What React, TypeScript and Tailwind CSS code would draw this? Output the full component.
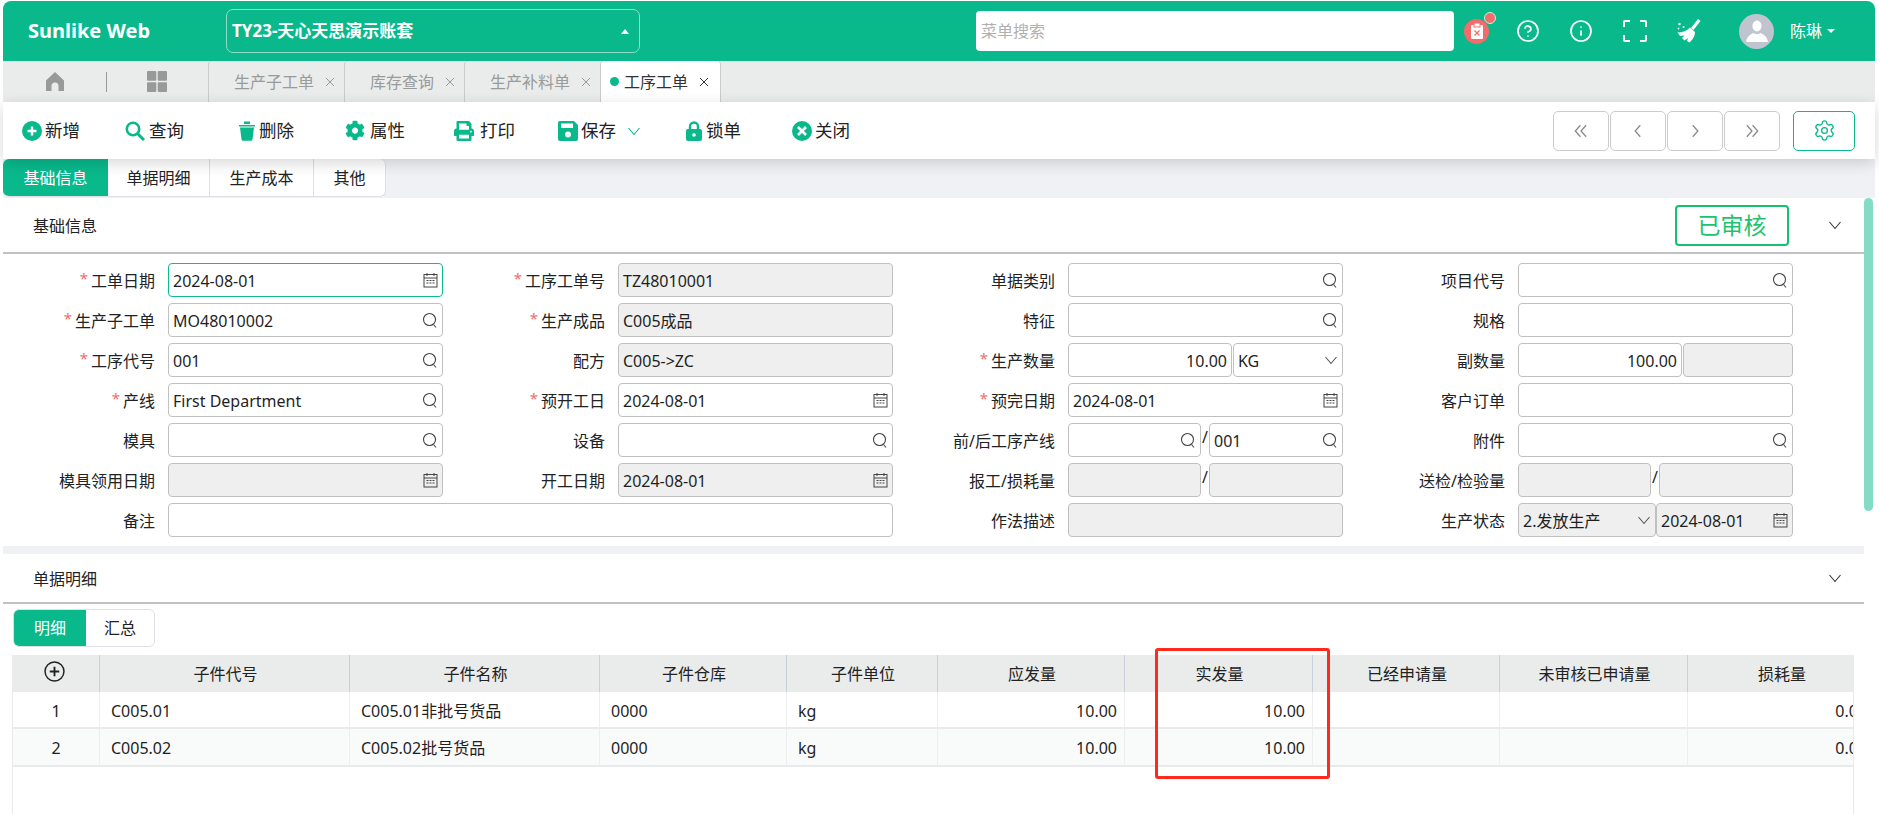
import type { ReactNode } from "react";
import { CircleHelp, Info, Settings } from "lucide-react";
import { FaCog, FaPrint } from "react-icons/fa";

const GREEN = "#09b98c";

function SearchIcon() {
  return (
    <svg width="16" height="17" viewBox="0 0 16 17" fill="none" stroke="#444" strokeWidth="1.1" className="shrink-0">
      <circle cx="7.5" cy="7.5" r="6" />
      <path d="M11.5 12.5l2.5 3" />
    </svg>
  );
}

function CalendarIcon() {
  return (
    <svg width="15" height="16" viewBox="0 0 15 16" fill="none" stroke="#444" strokeWidth="1" className="shrink-0">
      <rect x="1" y="2.5" width="13" height="12.5" />
      <path d="M1 6h13M4 1v3M11 1v3" />
      <path d="M3.5 8.5h2M6.5 8.5h2M9.5 8.5h2M3.5 11h2M6.5 11h2M9.5 11h2" strokeWidth="1.2" />
    </svg>
  );
}

function Chevron({ color = "#555", size = 14 }: { color?: string; size?: number }) {
  return (
    <svg width={size} height={size} viewBox="0 0 14 14" fill="none" stroke={color} strokeWidth="1.1" className="shrink-0">
      <path d="M1.5 4l5.5 6.5L12.5 4" />
    </svg>
  );
}

type BoxProps = {
  children?: ReactNode;
  icon?: ReactNode;
  disabled?: boolean;
  focused?: boolean;
  right?: boolean;
  className?: string;
};

function Box({ children, icon, disabled, focused, right, className = "w-[275px]" }: BoxProps) {
  return (
    <div
      className={`flex h-[34px] shrink-0 items-center rounded-[4px] border pl-[4px] pr-[4px] text-[16px] ${className} ${
        disabled ? "bg-[#eeefee]" : "bg-white"
      } ${focused ? "border-[#0cbb8f]" : "border-[#c0c0c0]"} ${right ? "justify-end" : "justify-between"}`}
    >
      {children !== undefined ? <span className="whitespace-nowrap pt-[2px]">{children}</span> : <span />}
      {icon}
    </div>
  );
}

function Field({ label, req, wide, children }: { label: string; req?: boolean; wide?: boolean; children: ReactNode }) {
  return (
    <div className={`flex items-center ${wide ? "col-span-2" : ""}`}>
      <div className="flex w-[151px] shrink-0 items-center justify-end pt-[2px] text-[16px] text-[#222]">
        {req && <span className="mr-[3px] -translate-y-[3px] text-[15px] text-[#f56c6c]">*</span>}
        {label}
      </div>
      <div className="ml-[13px] flex items-center">{children}</div>
    </div>
  );
}

function Slash() {
  return <span className="w-[8px] -translate-y-[3px] text-center text-[16px] leading-none">/</span>;
}

type ToolItemProps = { icon: ReactNode; label: string; width: string; gap?: string; extra?: ReactNode };

function ToolItem({ icon, label, width, gap = "ml-[3px]", extra }: ToolItemProps) {
  return (
    <div className={`flex shrink-0 items-center ${width}`}>
      <span className="flex w-[20px] justify-center">{icon}</span>
      <span className={`text-[17.500px] text-[#222] ${gap}`}>{label}</span>
      {extra}
    </div>
  );
}

function TopTab({ label, width, active }: { label: string; width: string; active?: boolean }) {
  return (
    <div
      className={`flex h-[41px] shrink-0 items-center rounded-t-[4px] border-l border-[#c8cccc] text-[16px] ${width} ${
        active ? "bg-white pl-[9px] text-[#333]" : "pl-[25px] text-[#9a9a9a]"
      }`}
    >
      {active && <span className="mr-[5px] h-[9px] w-[9px] rounded-full bg-[#09b98c]" />}
      <span className="whitespace-nowrap pt-px">{label}</span>
      <svg width="10" height="10" viewBox="0 0 10 10" stroke={active ? "#333" : "#999"} strokeWidth="1" className="ml-[11px] shrink-0">
        <path d="M1 1l8 8M9 1l-8 8" />
      </svg>
    </div>
  );
}

function NavBtn({ d }: { d: string }) {
  return (
    <div className="flex h-[40px] w-[56px] items-center justify-center rounded-[5px] border border-[#cccccc]">
      <svg width="16" height="16" viewBox="0 0 14 14" fill="none" stroke="#888" strokeWidth="1.1">
        <path d={d} />
      </svg>
    </div>
  );
}

const headers = ["子件代号", "子件名称", "子件仓库", "子件单位", "应发量", "实发量", "已经申请量", "未审核已申请量", "损耗量"];
const rows = [
  ["1", "C005.01", "C005.01非批号货品", "0000", "kg", "10.00", "10.00", "", "", "0.00"],
  ["2", "C005.02", "C005.02批号货品", "0000", "kg", "10.00", "10.00", "", "", "0.00"],
];

export default function App() {
  return (
    <div
      className="relative h-[814px] w-[1879px] overflow-hidden bg-white pl-[3px] pr-[4px] pt-px text-[#1f1f1f]"
      style={{ fontFamily: '"Noto Sans", "Noto Sans CJK SC", sans-serif' }}
    >
      {/* Header */}
      <header className="flex h-[60px] items-center rounded-t-[8px] bg-[#09b98c] text-white">
        <div className="ml-[25px] w-[198px] text-[20px] font-bold">Sunlike Web</div>
        <div className="flex h-[44px] w-[414px] items-center justify-between rounded-[7px] border border-[#8fdcc8] pl-[5px] pr-[10px] text-[17px] font-bold">
          <span>TY23-天心天思演示账套</span>
          <span className="h-0 w-0 border-x-[4px] border-b-[5px] border-x-transparent border-b-white" />
        </div>
        <div className="ml-[336px] flex h-[40px] w-[478px] items-center rounded-[4px] bg-white pl-[5px] text-[16px] text-[#b0b0b0]">
          菜单搜索
        </div>
        <div className="relative ml-[10px] flex h-[25px] w-[25px] items-center justify-center rounded-full bg-[#f36b6b]">
          <svg width="14" height="16" viewBox="0 0 14 16">
            <rect x="1" y="2" width="12" height="14" fill="#fff" rx="1" />
            <rect x="4" y="0" width="6" height="4" fill="#fff" stroke="#f36b6b" strokeWidth="1" />
            <path d="M4.5 7.5l5 5M9.5 7.5l-5 5" stroke="#f36b6b" strokeWidth="1.2" />
          </svg>
          <span className="absolute -right-[7px] -top-[7px] h-[12px] w-[12px] rounded-full border border-[#c9f0e4] bg-[#f36b6b]" />
        </div>
        <CircleHelp size={24} strokeWidth={1.7} className="ml-[27px]" />
        <Info size={24} strokeWidth={1.7} className="ml-[29px]" />
        <svg width="24" height="22" viewBox="0 0 24 22" fill="none" stroke="#fff" strokeWidth="2" className="ml-[30px]">
          <path d="M1 7V2a1 1 0 0 1 1-1h5M17 1h5a1 1 0 0 1 1 1v5M23 15v5a1 1 0 0 1-1 1h-5M7 21H2a1 1 0 0 1-1-1v-5" />
        </svg>
        <svg width="24" height="24" viewBox="0 0 24 24" fill="#fff" className="ml-[30px]">
          <path d="M21 0l2.500 2-7 9-2.500-2z" />
          <path d="M13 8.500l5 4.500c0 4-2.500 8-5.500 10.500L10 22l1-3-3.500 2.500L5 19l2.500-2.500L3 17l-2.500-3.500c5 0 9.500-1.500 12.500-5z" />
          <circle cx="2.500" cy="5" r="1.200" />
          <circle cx="6.500" cy="8" r="1" />
          <circle cx="1.500" cy="9.500" r="0.900" />
        </svg>
        <div className="ml-[38px] flex h-[35px] w-[35px] items-center justify-center overflow-hidden rounded-full bg-[#c0c4cf]">
          <svg width="22" height="24" viewBox="0 0 22 24" fill="#fff">
            <ellipse cx="11" cy="7" rx="4.6" ry="5.4" />
            <path d="M0 23c1-6 5-8 7.500-9 2 1.500 5 1.500 7 0 2.500 1 6.500 3 7.500 9z" />
          </svg>
        </div>
        <span className="ml-[16px] text-[16px]">陈琳</span>
        <span className="ml-[5px] h-0 w-0 border-x-[4px] border-t-[4px] border-x-transparent border-t-white" />
      </header>

      {/* Open tabs */}
      <nav className="flex h-[41px] items-center bg-[#e9eceb]">
        <svg width="20" height="21" viewBox="0 0 20 21" fill="#999" className="ml-[42px]">
          <path d="M10 1l9 8.500V20h-5.500v-5a3.500 3.500 0 0 0-7 0v5H1V9.500z" />
        </svg>
        <span className="ml-[41px] h-[20px] w-px bg-[#999]" />
        <svg width="20" height="21" viewBox="0 0 20 21" fill="#999" className="ml-[40px]">
          <rect x="0" y="0" width="9.300" height="9.800" rx="1" />
          <rect x="10.700" y="0" width="9.300" height="9.800" rx="1" />
          <rect x="0" y="11.200" width="9.300" height="9.800" rx="1" />
          <rect x="10.700" y="11.200" width="9.300" height="9.800" rx="1" />
        </svg>
        <div className="ml-[41px] flex">
          <TopTab label="生产子工单" width="w-[136px]" />
          <TopTab label="库存查询" width="w-[120px]" />
          <TopTab label="生产补料单" width="w-[136px]" />
          <TopTab label="工序工单" width="w-[121px] border-r" active />
        </div>
      </nav>

      {/* Toolbar */}
      <div className="relative z-10 flex h-[57px] items-center bg-white pl-[19px] pr-[20px] shadow-[0_4px_14px_rgba(0,0,0,0.16)]">
        <ToolItem
          width="w-[103px]"
          label="新增"
          icon={
            <svg width="20" height="20" viewBox="0 0 20 20">
              <circle cx="10" cy="10" r="10" fill={GREEN} />
              <path d="M10 5.500v9M5.500 10h9" stroke="#fff" strokeWidth="2.400" />
            </svg>
          }
        />
        <ToolItem
          width="w-[112px]"
          label="查询"
          gap="ml-[4px]"
          icon={
            <svg width="20" height="20" viewBox="0 0 20 20" fill="none" stroke={GREEN} strokeWidth="2.600">
              <circle cx="8" cy="8" r="6.200" />
              <path d="M12.500 12.500L19 19" strokeWidth="3" />
            </svg>
          }
        />
        <ToolItem
          width="w-[108px]"
          label="删除"
          gap="ml-[2px]"
          icon={
            <svg width="16" height="20" viewBox="0 0 16 20" fill={GREEN}>
              <path d="M0 4h16v1.500H0zM5 0.500h6V3H5zM1 6.500h14l-1.500 12a1.500 1.500 0 0 1-1.500 1.200H4a1.500 1.500 0 0 1-1.500-1.200z" />
            </svg>
          }
        />
        <ToolItem width="w-[109px]" label="属性" gap="ml-[5px]" icon={<FaCog size={21} color={GREEN} />} />
        <ToolItem width="w-[104px]" label="打印" gap="ml-[6px]" icon={<FaPrint size={22} color={GREEN} />} />
        <ToolItem
          width="w-[126px]"
          label="保存"
          gap="ml-[3px]"
          extra={
            <span className="ml-[11px]">
              <Chevron color={GREEN} />
            </span>
          }
          icon={
            <svg width="20" height="20" viewBox="0 0 20 20">
              <path d="M2 0h14l4 4v14a2 2 0 0 1-2 2H2a2 2 0 0 1-2-2V2a2 2 0 0 1 2-2z" fill={GREEN} />
              <rect x="3" y="2.500" width="12" height="4.500" fill="#fff" />
              <circle cx="10" cy="13.500" r="3" fill="#fff" />
            </svg>
          }
        />
        <ToolItem
          width="w-[108px]"
          label="锁单"
          gap="ml-[2px]"
          icon={
            <svg width="16" height="20" viewBox="0 0 16 20">
              <path d="M4 9V5.500a4 4 0 0 1 8 0V9" fill="none" stroke={GREEN} strokeWidth="2.400" />
              <rect x="0" y="8" width="16" height="12" rx="2" fill={GREEN} />
              <circle cx="8" cy="14" r="1.800" fill="#fff" />
            </svg>
          }
        />
        <ToolItem
          width="w-[100px]"
          label="关闭"
          icon={
            <svg width="20" height="20" viewBox="0 0 20 20">
              <circle cx="10" cy="10" r="10" fill={GREEN} />
              <path d="M6 6l8 8M14 6l-8 8" stroke="#fff" strokeWidth="2.600" />
            </svg>
          }
        />
        <div className="ml-auto flex items-center gap-px">
          <NavBtn d="M6.500 2L2 7l4.500 5M11.500 2L7 7l4.500 5" />
          <NavBtn d="M9 2L4.500 7 9 12" />
          <NavBtn d="M5 2l4.500 5L5 12" />
          <NavBtn d="M2.500 2L7 7l-4.500 5M7.500 2L12 7l-4.500 5" />
          <div className="ml-[12px] flex h-[40px] w-[62px] items-center justify-center rounded-[5px] border border-[#09b98c]">
            <Settings size={23} strokeWidth={1.4} color={GREEN} />
          </div>
        </div>
      </div>

      {/* Section tabs */}
      <div className="flex h-[39px] items-start bg-[#eff1f5]">
        <div className="flex h-[38px] overflow-hidden rounded-[6px] border-b border-r border-[#dcdfe6] bg-white pt-0 text-[16px] text-[#222]">
          <div className="flex w-[105px] items-center justify-center bg-[#09b98c] pt-px text-white">基础信息</div>
          <div className="flex w-[102px] items-center justify-center border-r border-[#dcdfe6] pt-px">单据明细</div>
          <div className="flex w-[104px] items-center justify-center border-r border-[#dcdfe6] pt-px">生产成本</div>
          <div className="flex w-[71px] items-center justify-center pt-px">其他</div>
        </div>
      </div>

      {/* Body */}
      <main className="relative w-[1861px]">
        <section className="bg-white pb-[9px]">
          <div className="flex h-[56px] items-center justify-between border-b-2 border-[#c2c2c2] pl-[30px] pr-[22px] text-[16px] text-[#222]">
            <span className="pt-[2px]">基础信息</span>
            <div className="flex items-center">
              <div className="flex h-[41px] w-[114px] items-center justify-center rounded-[4px] border-2 border-[#13c16e] text-[23px] text-[#1cc36c]">
                已审核
              </div>
              <span className="ml-[39px]">
                <Chevron color="#333" />
              </span>
            </div>
          </div>
          <div className="grid grid-cols-[repeat(4,450px)] gap-y-[6px] pl-[1px] pt-[9px]">
            <Field label="工单日期" req>
              <Box focused icon={<CalendarIcon />}>2024-08-01</Box>
            </Field>
            <Field label="工序工单号" req>
              <Box disabled>TZ48010001</Box>
            </Field>
            <Field label="单据类别">
              <Box icon={<SearchIcon />} />
            </Field>
            <Field label="项目代号">
              <Box icon={<SearchIcon />} />
            </Field>

            <Field label="生产子工单" req>
              <Box icon={<SearchIcon />}>MO48010002</Box>
            </Field>
            <Field label="生产成品" req>
              <Box disabled>C005成品</Box>
            </Field>
            <Field label="特征">
              <Box icon={<SearchIcon />} />
            </Field>
            <Field label="规格">
              <Box />
            </Field>

            <Field label="工序代号" req>
              <Box icon={<SearchIcon />}>001</Box>
            </Field>
            <Field label="配方">
              <Box disabled>{"C005->ZC"}</Box>
            </Field>
            <Field label="生产数量" req>
              <Box right className="w-[164px]">10.00</Box>
              <Box className="ml-px w-[110px]" icon={<Chevron />}>KG</Box>
            </Field>
            <Field label="副数量">
              <Box right className="w-[164px]">100.00</Box>
              <Box disabled className="ml-px w-[110px]" />
            </Field>

            <Field label="产线" req>
              <Box icon={<SearchIcon />}>First Department</Box>
            </Field>
            <Field label="预开工日" req>
              <Box icon={<CalendarIcon />}>2024-08-01</Box>
            </Field>
            <Field label="预完日期" req>
              <Box icon={<CalendarIcon />}>2024-08-01</Box>
            </Field>
            <Field label="客户订单">
              <Box />
            </Field>

            <Field label="模具">
              <Box icon={<SearchIcon />} />
            </Field>
            <Field label="设备">
              <Box icon={<SearchIcon />} />
            </Field>
            <Field label="前/后工序产线">
              <Box className="w-[133px]" icon={<SearchIcon />} />
              <Slash />
              <Box className="w-[134px]" icon={<SearchIcon />}>001</Box>
            </Field>
            <Field label="附件">
              <Box icon={<SearchIcon />} />
            </Field>

            <Field label="模具领用日期">
              <Box disabled icon={<CalendarIcon />} />
            </Field>
            <Field label="开工日期">
              <Box disabled icon={<CalendarIcon />}>2024-08-01</Box>
            </Field>
            <Field label="报工/损耗量">
              <Box disabled className="w-[133px]" />
              <Slash />
              <Box disabled className="w-[134px]" />
            </Field>
            <Field label="送检/检验量">
              <Box disabled className="w-[133px]" />
              <Slash />
              <Box disabled className="w-[134px]" />
            </Field>

            <Field label="备注" wide>
              <Box className="w-[725px]" />
            </Field>
            <Field label="作法描述">
              <Box disabled />
            </Field>
            <Field label="生产状态">
              <Box disabled className="w-[138px]" icon={<Chevron />}>2.发放生产</Box>
              <Box disabled className="w-[137px]" icon={<CalendarIcon />}>2024-08-01</Box>
            </Field>
          </div>
        </section>

        <div className="h-[8px] bg-[#eff1f5]" />

        <section className="bg-white">
          <div className="flex h-[50px] items-center justify-between border-b-2 border-[#c2c2c2] pl-[30px] pr-[22px] text-[16px] text-[#222]">
            <span className="pt-[2px]">单据明细</span>
            <Chevron color="#333" />
          </div>
          <div className="pl-[10px] pr-[10px] pt-[5px]">
            <div className="flex h-[38px] w-[142px] overflow-hidden rounded-[6px] border border-[#dcdfe6] text-[16px]">
              <div className="flex w-[72px] items-center justify-center bg-[#09b98c] text-white">明细</div>
              <div className="flex flex-1 items-center justify-center text-[#222]">汇总</div>
            </div>
            <div className="-ml-px mt-[8px] h-[200px] overflow-hidden border-x border-[#e8eaec]">
              <div className="grid w-max grid-cols-[87px_250px_250px_187px_151px_187px_188px_187px_188px_187px] text-[16px]">
                <div className="flex h-[37px] items-center justify-center border-r border-[#c9cfdc] bg-[#e9eceb]">
                  <svg width="21" height="21" viewBox="0 0 20 20" fill="none" stroke="#222" className="-translate-x-[2px] -translate-y-[2px]">
                    <circle cx="10" cy="10" r="9" strokeWidth="1.400" />
                    <path d="M10 5.500v9M5.500 10h9" strokeWidth="1.800" />
                  </svg>
                </div>
                {headers.map((h) => (
                  <div key={h} className="flex h-[37px] items-center justify-center border-r border-[#c9cfdc] bg-[#e9eceb] pl-[2px] text-[#222]">
                    {h}
                  </div>
                ))}
                {rows.map((row, ri) =>
                  row.map((cell, ci) => {
                    const align = ci === 0 ? "justify-center" : ci >= 5 ? "justify-end pr-[7px]" : "pl-[11px]";
                    return (
                      <div
                        key={`${ri}-${ci}`}
                        className={`flex items-center whitespace-nowrap border-b-2 border-r border-b-[#e8eaec] border-r-[#eceef0] pt-[2px] ${align} ${
                          ri === 1 ? "h-[38px] bg-[#f9fafa]" : "h-[37px] bg-white"
                        }`}
                      >
                        {cell}
                      </div>
                    );
                  }),
                )}
              </div>
            </div>
          </div>
        </section>

        {/* Scrollbar thumb and the red mark over the table */}
        <div className="absolute left-[1861px] top-0 h-[313px] w-[9px] rounded-[5px] bg-[#84dcc4]" />
        <div className="absolute left-[1152px] top-[450px] h-[131px] w-[175px] rounded-[3px] border-[3px] border-[#ff2a1f]" />
      </main>
    </div>
  );
}
